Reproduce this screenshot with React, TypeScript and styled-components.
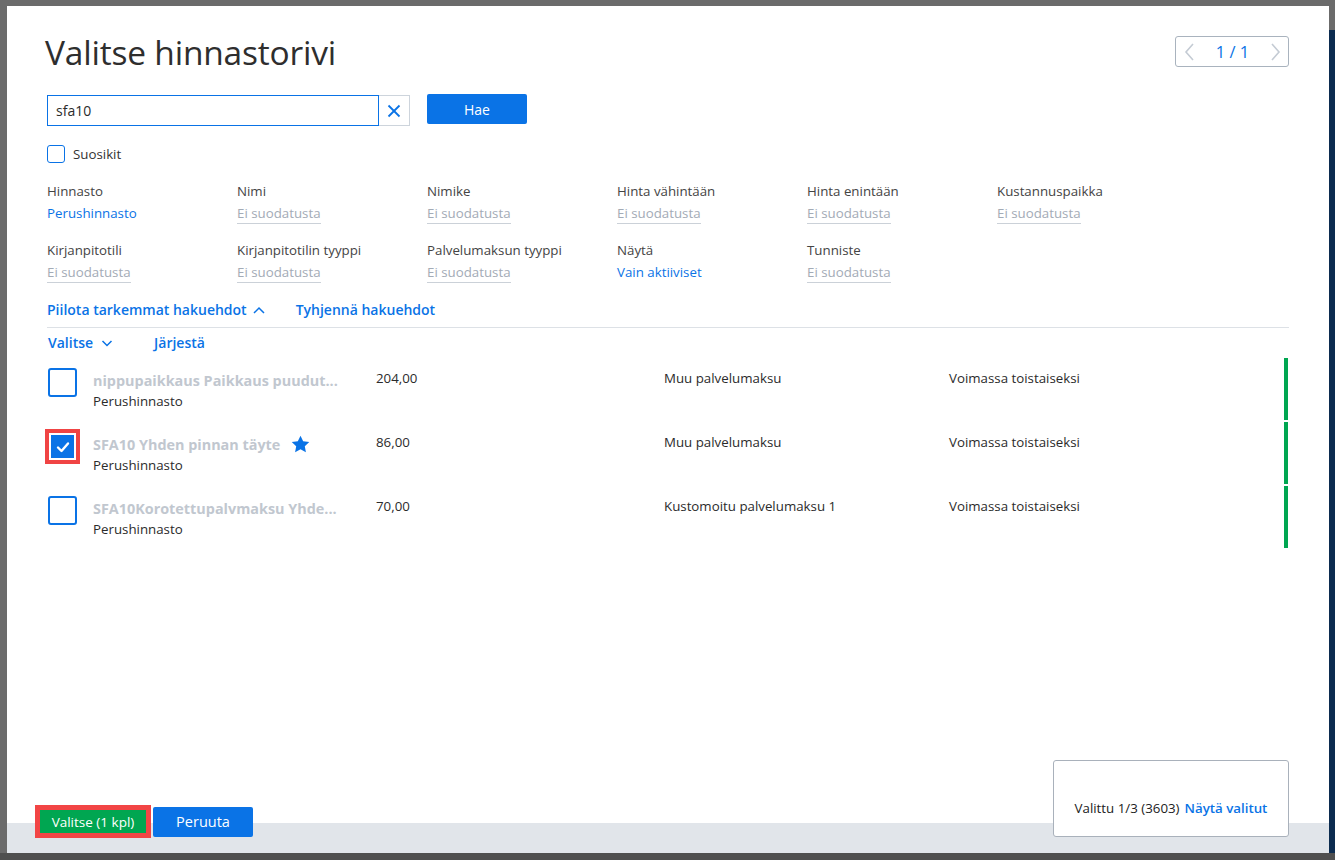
import React, { useState } from 'react';
import styled, { createGlobalStyle } from 'styled-components';

const BLUE = '#0a73e6';
const GREEN = '#00a651';

const GlobalStyle = createGlobalStyle`
  html, body {
    margin: 0;
    padding: 0;
    background: #6a6a6a;
    font-family: "Open Sans", "Noto Sans", Arial, sans-serif;
    color: #2b2b2b;
  }
  * { box-sizing: border-box; }
`;

interface IFilter {
  label: string;
  value?: string;
}

interface IPriceRow {
  name: string;
  list: string;
  price: string;
  type: string;
  status: string;
  favourite?: boolean;
}

const filters: IFilter[] = [
  { label: 'Hinnasto', value: 'Perushinnasto' },
  { label: 'Nimi' },
  { label: 'Nimike' },
  { label: 'Hinta vähintään' },
  { label: 'Hinta enintään' },
  { label: 'Kustannuspaikka' },
  { label: 'Kirjanpitotili' },
  { label: 'Kirjanpitotilin tyyppi' },
  { label: 'Palvelumaksun tyyppi' },
  { label: 'Näytä', value: 'Vain aktiiviset' },
  { label: 'Tunniste' },
];

const rows: IPriceRow[] = [
  { name: 'nippupaikkaus Paikkaus puudut...', list: 'Perushinnasto', price: '204,00', type: 'Muu palvelumaksu', status: 'Voimassa toistaiseksi' },
  { name: 'SFA10 Yhden pinnan täyte', list: 'Perushinnasto', price: '86,00', type: 'Muu palvelumaksu', status: 'Voimassa toistaiseksi', favourite: true },
  { name: 'SFA10Korotettupalvmaksu Yhde...', list: 'Perushinnasto', price: '70,00', type: 'Kustomoitu palvelumaksu 1', status: 'Voimassa toistaiseksi' },
];

const ChevronLeft = () => (
  <svg width="11" height="18" viewBox="0 0 11 18" fill="none" stroke="#c4cbd4" strokeWidth="1.6">
    <polyline points="9,1 2,9 9,17" />
  </svg>
);

const ChevronRight = () => (
  <svg width="11" height="18" viewBox="0 0 11 18" fill="none" stroke="#c4cbd4" strokeWidth="1.6">
    <polyline points="2,1 9,9 2,17" />
  </svg>
);

const SmallChevron: React.FC<{ up?: boolean }> = ({ up }) => (
  <svg width="12" height="8" viewBox="0 0 12 8" fill="none" stroke={BLUE} strokeWidth="1.5">
    {up ? <polyline points="1,7 6,2 11,7" /> : <polyline points="1.5,2 6,6.5 10.5,2" />}
  </svg>
);

const ClearIcon = () => (
  <svg width="14" height="14" viewBox="0 0 14 14" stroke={BLUE} strokeWidth="1.8">
    <line x1="1.5" y1="1.5" x2="12.5" y2="12.5" />
    <line x1="12.5" y1="1.5" x2="1.5" y2="12.5" />
  </svg>
);

const CheckIcon = () => (
  <svg width="14" height="12" viewBox="0 0 14 12" fill="none" stroke="#fff" strokeWidth="2.4" strokeLinecap="round" strokeLinejoin="round">
    <polyline points="2,6.5 5.5,10 12,2.5" />
  </svg>
);

const StarIcon = () => (
  <svg width="19" height="18" viewBox="0 0 24 23" fill={BLUE}>
    <path d="M12 0.8l3.4 7.1 7.8 1-5.7 5.4 1.4 7.7L12 18.3 5.1 22l1.4-7.7L0.8 8.9l7.8-1z" />
  </svg>
);

const App: React.FC = () => {
  const [query, setQuery] = useState('sfa10');
  const [favourites, setFavourites] = useState(false);
  const [selected, setSelected] = useState<number[]>([1]);

  const toggleRow = (i: number) => {
    setSelected(selected.includes(i) ? selected.filter((s) => s !== i) : [...selected, i]);
  };

  return (
    <Screen>
      <GlobalStyle />
      <Modal>
        <Body>
          <HeaderRow>
            <Title>Valitse hinnastorivi</Title>
            <Pager>
              <ChevronLeft />
              <PagerText>1 / 1</PagerText>
              <ChevronRight />
            </Pager>
          </HeaderRow>

          <SearchRow>
            <SearchField>
              <SearchInput value={query} onChange={(e) => setQuery(e.target.value)} />
              <ClearButton onClick={() => setQuery('')}>
                <ClearIcon />
              </ClearButton>
            </SearchField>
            <PrimaryButton $width={100}>Hae</PrimaryButton>
          </SearchRow>

          <CheckRow onClick={() => setFavourites(!favourites)}>
            <SmallBox $checked={favourites}>{favourites && <CheckIcon />}</SmallBox>
            <span>Suosikit</span>
          </CheckRow>

          <FilterGrid>
            {filters.map((f) => (
              <FilterItem key={f.label}>
                <FilterLabel>{f.label}</FilterLabel>
                <FilterValue $active={!!f.value}>{f.value || 'Ei suodatusta'}</FilterValue>
              </FilterItem>
            ))}
          </FilterGrid>

          <LinkRow>
            <TextLink>
              Piilota tarkemmat hakuehdot <SmallChevron up />
            </TextLink>
            <TextLink>Tyhjennä hakuehdot</TextLink>
          </LinkRow>

          <ListToolbar>
            <ToolLink>
              Valitse <SmallChevron />
            </ToolLink>
            <ToolLink>Järjestä</ToolLink>
          </ListToolbar>

          <List>
            {rows.map((r, i) => {
              const checked = selected.includes(i);
              return (
                <Row key={r.name}>
                  <BoxCell>
                    <RowBox $checked={checked} onClick={() => toggleRow(i)}>
                      {checked && <CheckIcon />}
                    </RowBox>
                  </BoxCell>
                  <NameCell>
                    <RowTitle>
                      {r.name}
                      {r.favourite && (
                        <StarWrap>
                          <StarIcon />
                        </StarWrap>
                      )}
                    </RowTitle>
                    <RowSub>{r.list}</RowSub>
                  </NameCell>
                  <Cell>{r.price}</Cell>
                  <Cell>{r.type}</Cell>
                  <Cell>{r.status}</Cell>
                  <ActiveBar />
                </Row>
              );
            })}
          </List>
        </Body>

        <Footer>
          <FooterButtons>
            <Highlight>
              <ConfirmButton>Valitse ({selected.length} kpl)</ConfirmButton>
            </Highlight>
            <PrimaryButton $width={100} $large>Peruuta</PrimaryButton>
          </FooterButtons>
          <SelectionPanel>
            <span>Valittu {selected.length}/3 (3603)</span>
            <PanelLink>Näytä valitut</PanelLink>
          </SelectionPanel>
        </Footer>
      </Modal>
      <SideStrip />
    </Screen>
  );
};

export default App;

const Screen = styled.div`
  display: flex;
  height: 860px;
  padding: 6px 0 7px 7px;
  background: linear-gradient(to bottom, #6b6b6b 853px, #4f4f4f 853px);
`;

const Modal = styled.div`
  width: 1322px;
  height: 847px;
  flex-shrink: 0;
  background: #fff;
  display: flex;
  flex-direction: column;
`;

const SideStrip = styled.div`
  flex: 1;
  background: linear-gradient(to bottom, #6b6b6b 24px, #0c2c50 24px);
`;

const Body = styled.div`
  flex: 1;
  padding: 24px 40px 0 40px;
  display: flex;
  flex-direction: column;
`;

const HeaderRow = styled.div`
  display: flex;
  justify-content: space-between;
  align-items: flex-start;
  height: 65px;
`;

const Title = styled.h1`
  margin: 0 0 0 -2px;
  font-size: 33.5px;
  font-weight: 400;
  line-height: 44px;
  color: #2e2e2e;
  letter-spacing: -0.2px;
`;

const Pager = styled.div`
  margin-top: 6px;
  width: 114px;
  height: 31px;
  border: 1px solid #a9b3be;
  border-radius: 3px;
  display: flex;
  align-items: center;
  justify-content: space-between;
  padding: 0 7px 0 8px;
`;

const PagerText = styled.span`
  color: ${BLUE};
  font-size: 16.5px;
`;

const SearchRow = styled.div`
  display: flex;
  align-items: flex-start;
  gap: 17px;
`;

const SearchField = styled.div`
  display: flex;
  height: 31px;
`;

const SearchInput = styled.input`
  width: 332px;
  height: 31px;
  border: 1px solid ${BLUE};
  padding: 0 8px;
  font-family: inherit;
  font-size: 14px;
  color: #2b2b2b;
  outline: none;
`;

const ClearButton = styled.button`
  width: 31px;
  height: 31px;
  border: 1px solid #cdd4dc;
  border-left: none;
  background: #fff;
  display: flex;
  align-items: center;
  justify-content: center;
  padding: 0;
  cursor: pointer;
`;

const PrimaryButton = styled.button<{ $width: number; $large?: boolean }>`
  width: ${(p) => p.$width}px;
  height: 30px;
  margin-top: ${(p) => (p.$large ? 0 : -1)}px;
  border: none;
  border-radius: 2px;
  background: ${BLUE};
  color: #fff;
  font-family: inherit;
  font-size: ${(p) => (p.$large ? 14.5 : 14)}px;
  cursor: pointer;
`;

const CheckRow = styled.label`
  display: flex;
  align-items: center;
  gap: 8px;
  margin-top: 19px;
  font-size: 13.3px;
  color: #333;
  cursor: pointer;
`;

const SmallBox = styled.span<{ $checked: boolean }>`
  width: 18px;
  height: 18px;
  border: 1px solid ${BLUE};
  border-radius: 3px;
  background: ${(p) => (p.$checked ? BLUE : '#fff')};
  display: flex;
  align-items: center;
  justify-content: center;
`;

const FilterGrid = styled.div`
  display: grid;
  grid-template-columns: repeat(6, 190px);
  row-gap: 16px;
  margin-top: 18px;
`;

const FilterItem = styled.div`
  display: flex;
  flex-direction: column;
  align-items: flex-start;
`;

const FilterLabel = styled.span`
  font-size: 13.3px;
  line-height: 20px;
  color: #444;
`;

const FilterValue = styled.span<{ $active: boolean }>`
  margin-top: 3px;
  font-size: 13.3px;
  line-height: 19px;
  color: ${(p) => (p.$active ? BLUE : '#a3abb6')};
  border-bottom: 1px solid ${(p) => (p.$active ? 'transparent' : '#cbd1d8')};
  cursor: pointer;
`;

const LinkRow = styled.div`
  display: flex;
  align-items: center;
  gap: 31px;
  margin-top: 17px;
  padding-bottom: 7px;
  border-bottom: 1px solid #dde1e6;
`;

const TextLink = styled.a`
  display: flex;
  align-items: center;
  gap: 6px;
  font-size: 14px;
  line-height: 20px;
  font-weight: 600;
  color: ${BLUE};
  cursor: pointer;
`;

const ListToolbar = styled.div`
  display: flex;
  align-items: flex-start;
  gap: 41px;
  padding: 5px 0 0 1px;
  height: 30px;
`;

const ToolLink = styled(TextLink)`
  gap: 8px;
`;

const List = styled.div`
  display: flex;
  flex-direction: column;
  gap: 2px;
`;

const Row = styled.div`
  display: grid;
  grid-template-columns: 46px 283px 288px 285px 1fr 4px;
  height: 62px;
  padding-right: 1px;
  align-items: start;
`;

const BoxCell = styled.div`
  padding: 10px 0 0 1px;
  display: flex;
`;

const RowBox = styled.span<{ $checked: boolean }>`
  width: 29px;
  height: 29px;
  border: 2px solid ${BLUE};
  border-radius: 3px;
  background: #fff;
  display: flex;
  align-items: center;
  justify-content: center;
  cursor: pointer;

  ${(p) =>
    p.$checked &&
    `
    width: 23px;
    height: 23px;
    margin: 3px 0 0 3px;
    border: none;
    border-radius: 0;
    background: ${BLUE};
    box-shadow: 0 0 0 2px #fff, 0 0 0 6px #f04444;
  `}
`;

const NameCell = styled.div`
  padding-top: 11px;
  display: flex;
  flex-direction: column;
`;

const RowTitle = styled.div`
  display: flex;
  align-items: center;
  height: 22px;
  font-size: 14.4px;
  font-weight: 700;
  color: #c1c7cf;
  white-space: nowrap;
`;

const StarWrap = styled.span`
  display: flex;
  margin-left: 11px;
`;

const RowSub = styled.div`
  font-size: 13.3px;
  line-height: 20px;
  color: #2b2b2b;
`;

const Cell = styled.div`
  padding-top: 10px;
  font-size: 13.3px;
  line-height: 20px;
  color: #2b2b2b;
`;

const ActiveBar = styled.div`
  height: 100%;
  background: ${GREEN};
`;

const Footer = styled.div`
  display: flex;
  justify-content: space-between;
  align-items: flex-end;
  padding: 0 40px 15px 28px;
  background: linear-gradient(to bottom, #fff calc(100% - 30px), #e1e5ea calc(100% - 30px));
`;

const FooterButtons = styled.div`
  display: flex;
  align-items: center;
  gap: 2px;
`;

const Highlight = styled.div`
  border: 5px solid #f24545;
  display: flex;
`;

const ConfirmButton = styled.button`
  width: 106px;
  height: 23px;
  border: none;
  background: ${GREEN};
  color: #fff;
  font-family: inherit;
  font-size: 13.5px;
  padding: 0;
  cursor: pointer;
`;

const SelectionPanel = styled.div`
  width: 236px;
  height: 77px;
  border: 1px solid #a9b1bb;
  border-radius: 3px;
  background: #fff;
  display: flex;
  align-items: flex-end;
  justify-content: center;
  gap: 5px;
  padding-bottom: 19px;
  font-size: 13.3px;
  color: #222;
  margin-bottom: 1px;
`;

const PanelLink = styled.a`
  color: ${BLUE};
  font-weight: 600;
  cursor: pointer;
`;
